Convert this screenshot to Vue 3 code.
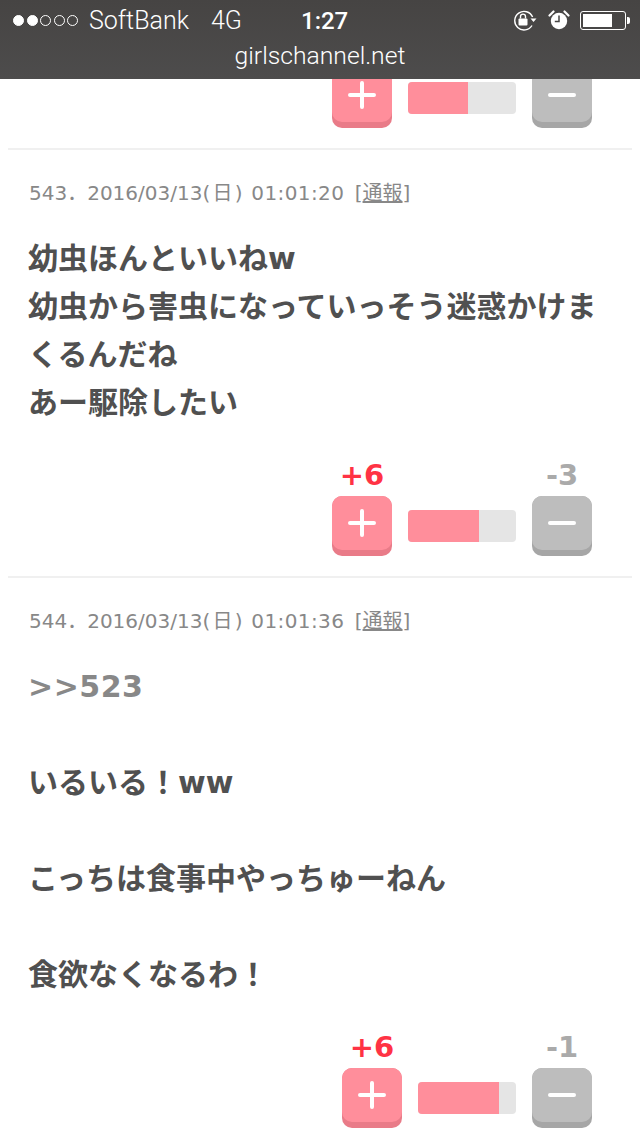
<script setup>
const comments = [
  {
    no: '543',
    date: '2016/03/13',
    day: '(日)',
    time: '01:01:20',
    lines: ['幼虫ほんといいねw', '幼虫から害虫になっていっそう迷惑かけまくるんだね', 'あー駆除したい'],
    up: 6, down: 3, barWidth: 108, fill: 71,
  },
  {
    no: '544',
    date: '2016/03/13',
    day: '(日)',
    time: '01:01:36',
    anchor: '>>523',
    lines: ['', 'いるいる！ww', '', 'こっちは食事中やっちゅーねん', '', '食欲なくなるわ！'],
    up: 6, down: 1, barWidth: 98, fill: 81,
  },
]
</script>

<template>
  <div class="page">
    <header class="status">
      <div class="status-row">
        <div class="signal">
          <i class="dot on"></i><i class="dot on"></i><i class="dot"></i><i class="dot"></i><i class="dot"></i>
        </div>
        <span class="carrier">SoftBank</span>
        <span class="network">4G</span>
        <span class="clock">1:27</span>
        <div class="status-icons">
          <svg class="lock" width="26" height="22" viewBox="0 0 26 22">
            <path d="M20 16.5A9.3 9.3 0 1 1 20.6 8" fill="none" stroke="#fff" stroke-width="1.4" />
            <path d="M18.5 9.5h6l-3 3.5z" fill="#fff" />
            <rect x="6.5" y="9.5" width="9" height="7" rx="1" fill="#fff" />
            <path d="M8.5 9.5V7.6a2.5 2.5 0 0 1 5 0v1.9" fill="none" stroke="#fff" stroke-width="1.4" />
          </svg>
          <svg class="alarm" width="22" height="20" viewBox="0 0 22 20">
            <circle cx="11" cy="11" r="8.2" fill="#fff" />
            <path d="M11 5.5V11.5H6.8" fill="none" stroke="#474544" stroke-width="1.5" />
            <path d="M1.5 5.5 5.5 1.5M20.5 5.5 16.5 1.5" stroke="#fff" stroke-width="2.2" stroke-linecap="round" />
          </svg>
          <div class="battery"><div class="charge"></div></div>
          <div class="nub"></div>
        </div>
      </div>
      <div class="domain">girlschannel.net</div>
    </header>

    <section class="comment first">
      <div class="votes">
        <div class="vote">
          <span class="count"></span>
          <div class="key plus">
            <div class="face">
              <svg width="28" height="28" viewBox="0 0 28 28"><path d="M2 14H26M14 2V26" stroke="#fff" stroke-width="4" stroke-linecap="round" /></svg>
            </div>
          </div>
        </div>
        <div class="bar" style="width: 108px"><div class="bar-fill" style="width: 60px"></div></div>
        <div class="vote">
          <span class="count"></span>
          <div class="key minus">
            <div class="face">
              <svg width="28" height="28" viewBox="0 0 28 28"><path d="M2 14H26" stroke="#fff" stroke-width="4" stroke-linecap="round" /></svg>
            </div>
          </div>
        </div>
      </div>
    </section>

    <section v-for="c in comments" :key="c.no" class="comment">
      <p class="meta">{{ c.no }}．{{ c.date }}<span class="day">{{ c.day }}</span> <span class="time">{{ c.time }}</span> <span class="tail">[<a class="report">通報</a>]</span></p>
      <div class="body">
        <p v-if="c.anchor" class="anchor">{{ c.anchor }}</p>
        <p v-for="(line, i) in c.lines" :key="i" class="line">{{ line }}</p>
      </div>
      <div class="votes">
        <div class="vote">
          <span class="count up">+{{ c.up }}</span>
          <div class="key plus">
            <div class="face">
              <svg width="28" height="28" viewBox="0 0 28 28"><path d="M2 14H26M14 2V26" stroke="#fff" stroke-width="4" stroke-linecap="round" /></svg>
            </div>
          </div>
        </div>
        <div class="bar" :style="{ width: c.barWidth + 'px' }"><div class="bar-fill" :style="{ width: c.fill + 'px' }"></div></div>
        <div class="vote">
          <span class="count down">-{{ c.down }}</span>
          <div class="key minus">
            <div class="face">
              <svg width="28" height="28" viewBox="0 0 28 28"><path d="M2 14H26" stroke="#fff" stroke-width="4" stroke-linecap="round" /></svg>
            </div>
          </div>
        </div>
      </div>
    </section>
  </div>
</template>

<style scoped>
.page {
  position: relative;
  height: 1136px;
  overflow: hidden;
  background: #fff;
  font-family: "DejaVu Sans", "Noto Sans CJK JP", sans-serif;
}

/* Translucent browser chrome lying over the scrolled page */
.status {
  position: absolute;
  top: 0;
  left: 0;
  right: 0;
  z-index: 2;
  height: 79px;
  background: linear-gradient(180deg, #464443 0%, #4d4c4c 100%);
  color: #fff;
  font-family: Roboto, sans-serif;
}
.status-row {
  position: relative;
  display: flex;
  align-items: center;
  height: 41px;
  padding-left: 13px;
  font-size: 25px;
  font-weight: 300;
}
.signal {
  display: flex;
  gap: 2.5px;
  width: 76px;
}
.dot {
  width: 11px;
  height: 11px;
  box-sizing: border-box;
  border: 1px solid #fff;
  border-radius: 50%;
}
.dot.on {
  background: #fff;
}
.carrier {
  width: 122px;
}
.network {
  width: 90px;
}
.clock {
  font-size: 24px;
  font-weight: 500;
}
.status-icons {
  position: absolute;
  top: 0;
  left: 512px;
  height: 40px;
  display: flex;
  align-items: center;
}
.lock {
  margin-right: 10px;
}
.alarm {
  margin-right: 10px;
}
.battery {
  box-sizing: border-box;
  width: 46px;
  height: 19px;
  padding: 2px;
  border: 1px solid #fff;
  border-radius: 3px;
}
.charge {
  width: 29px;
  height: 13px;
  background: #fff;
}
.nub {
  width: 3px;
  height: 7px;
  margin-left: 1px;
  background: #fff;
  border-radius: 0 2px 2px 0;
}
.domain {
  font-size: 24.7px;
  font-weight: 300;
  line-height: 29px;
  text-align: center;
}

.comment {
  margin: 0 8px;
  padding: 29px 40px 20px 21px;
  border-bottom: 2px solid #f0f0f0;
}
.comment.first {
  padding-top: 28px;
}
.meta {
  margin: 0;
  font-size: 20px;
  line-height: 28px;
  color: #888;
  white-space: nowrap;
}
.day {
  letter-spacing: 2.3px;
}
.time {
  letter-spacing: 0.4px;
}
.tail {
  margin-left: 4px;
}
.report {
  text-decoration: underline;
}
.body {
  margin: 28px -21px 29px -1px;
  font-size: 30px;
  font-weight: 700;
  line-height: 48px;
  color: #505050;
}
.line,
.anchor {
  margin: 0;
  min-height: 48px;
}
.anchor {
  color: #888;
  letter-spacing: 0.5px;
}

.votes {
  display: flex;
  justify-content: flex-end;
  align-items: flex-end;
  gap: 16px;
}
.vote {
  display: flex;
  flex-direction: column;
  align-items: center;
  gap: 4px;
  width: 60px;
}
.count {
  height: 36px;
  font-size: 29px;
  font-weight: 700;
  line-height: 38px;
  white-space: nowrap;
}
.count.up {
  color: #ff3344;
}
.count.down {
  color: #aaa;
}
.key {
  width: 60px;
  height: 60px;
  border-radius: 10px;
}
.face {
  display: flex;
  align-items: center;
  justify-content: center;
  height: 54px;
  border-radius: 10px;
}
.key.plus {
  background: #e97b88;
}
.key.plus .face {
  background: #ff8e9b;
}
.key.minus {
  background: #a6a6a6;
}
.key.minus .face {
  background: #bdbdbd;
}
.bar {
  height: 32px;
  margin-bottom: 14px;
  overflow: hidden;
  border-radius: 4px;
  background: #e5e5e5;
}
.bar-fill {
  height: 100%;
  background: #ff8e9b;
}
</style>

<style>
html, body {
  margin: 0;
  background: #fff;
}
</style>
